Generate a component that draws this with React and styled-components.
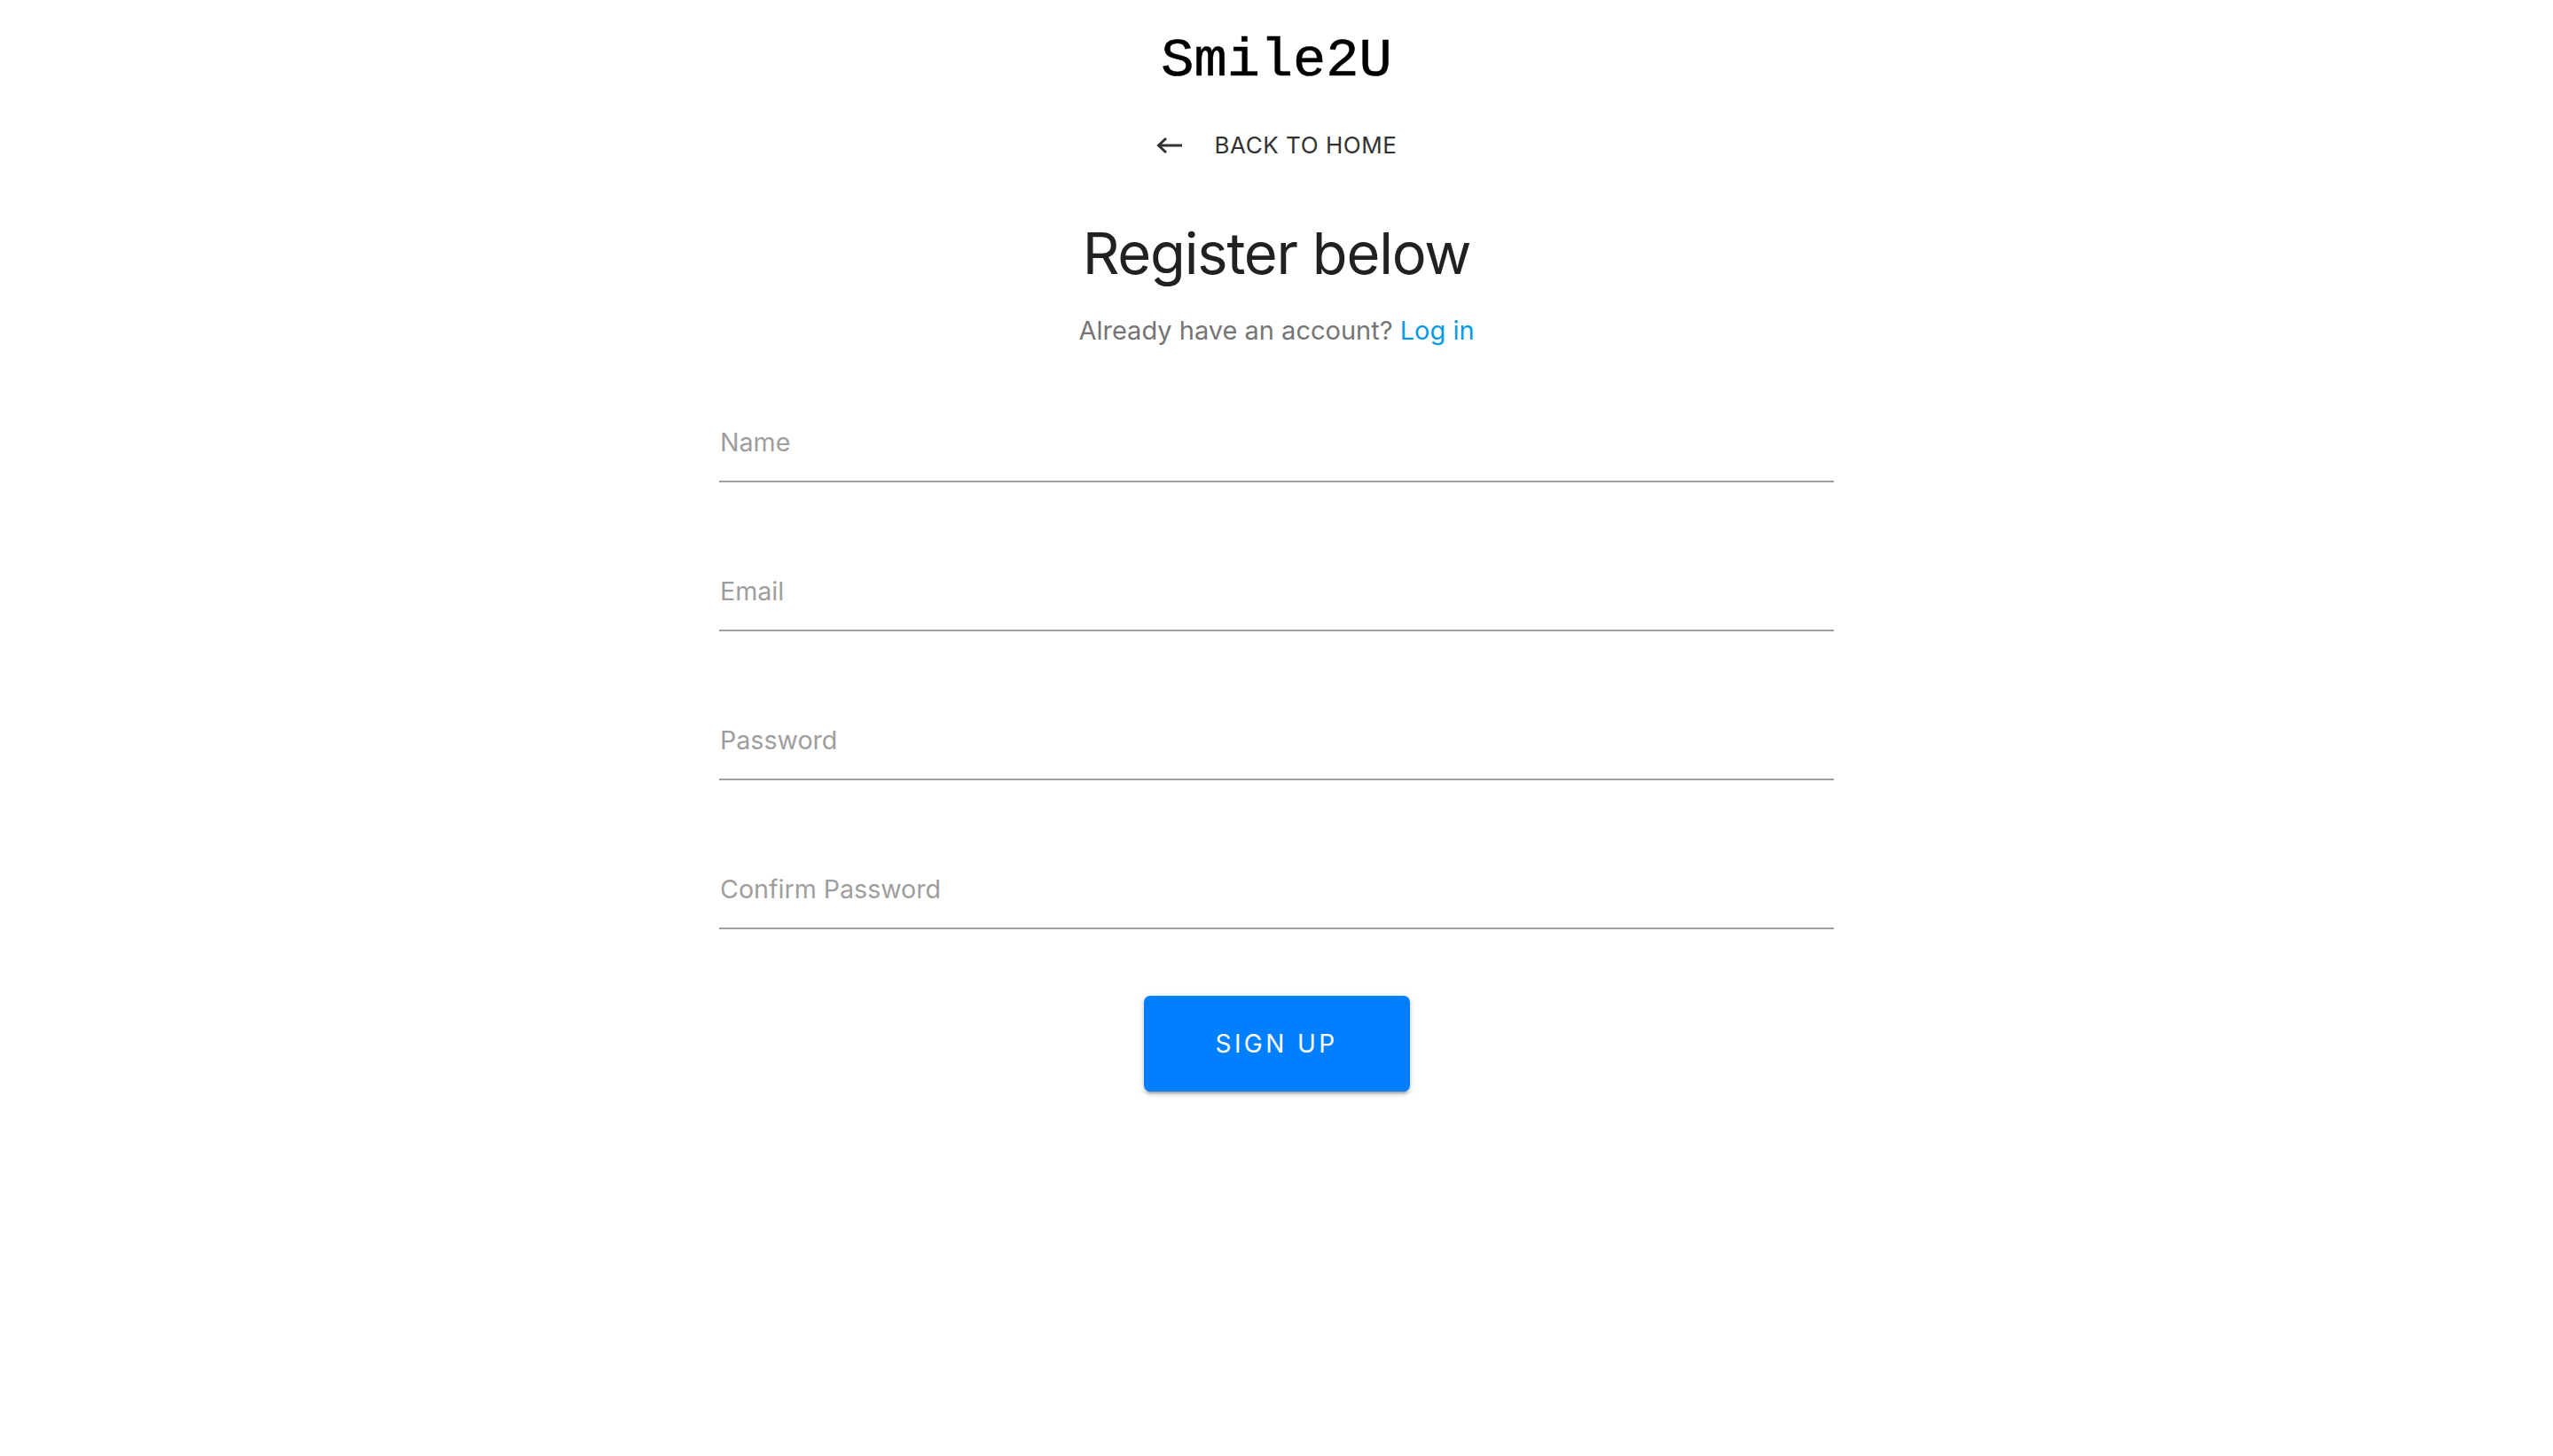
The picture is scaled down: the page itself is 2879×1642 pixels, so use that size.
import React from "react";
import styled, { createGlobalStyle } from "styled-components";

const GlobalStyle = createGlobalStyle`
  html, body { margin: 0; padding: 0; background: #ffffff; }
  body { font-family: Inter, "Noto Sans", sans-serif; }
  * { box-sizing: border-box; }
`;

const Page = styled.main`
  display: flex;
  flex-direction: column;
  align-items: center;
  padding-top: 34px;
  min-height: 1642px;
`;

const Logo = styled.div`
  font-family: "Liberation Mono", "Courier New", monospace;
  font-size: 62px;
  line-height: 70px;
  height: 70px;
  color: #000;
  -webkit-text-stroke: 0.6px #000;
`;

const BackLink = styled.a`
  margin-top: 40px;
  display: flex;
  align-items: center;
  gap: 36px;
  height: 40px;
  color: #333;
  text-decoration: none;
  font-family: Inter, sans-serif;
  font-size: 26px;
  line-height: 40px;
  letter-spacing: 0.55px;
  cursor: pointer;
`;

const Title = styled.h1`
  margin: 62px 0 0;
  font-family: Inter, sans-serif;
  font-weight: 400;
  font-size: 65px;
  line-height: 80px;
  height: 80px;
  color: #212121;
  letter-spacing: -1.2px;
`;

const Subtitle = styled.p`
  margin: 27px 0 0;
  font-family: Inter, sans-serif;
  font-size: 29px;
  line-height: 40px;
  height: 40px;
  color: #757575;
`;

const LoginLink = styled.a`
  color: #039be5;
  text-decoration: none;
`;

const Form = styled.form`
  margin-top: 82px;
  width: 1257px;
  display: flex;
  flex-direction: column;
  gap: 99px;
`;

const Field = styled.div`
  padding-bottom: 19px;
  border-bottom: 2px solid #9e9e9e;
`;

const Input = styled.input`
  display: block;
  width: 100%;
  height: 48px;
  padding: 0 0 0 1px;
  border: none;
  outline: none;
  background: transparent;
  font-family: Inter, sans-serif;
  font-size: 28.6px;
  line-height: 48px;
  color: #212121;
  &::placeholder {
    color: #9e9e9e;
    opacity: 1;
  }
`;

const Actions = styled.div`
  display: flex;
  justify-content: center;
  margin-top: -24px;
`;

const Button = styled.button`
  width: 300px;
  height: 108px;
  border: none;
  border-radius: 7px;
  background: #0080ff;
  color: #fff;
  font-family: Inter, sans-serif;
  font-weight: 400;
  font-size: 28px;
  letter-spacing: 3.4px;
  text-transform: uppercase;
  cursor: pointer;
  box-shadow: 0px 5px 2px -3px rgba(0, 0, 0, 0.2),
    0px 3px 4px 0px rgba(0, 0, 0, 0.14), 0px 2px 9px 0px rgba(0, 0, 0, 0.12);
`;

const ArrowIcon = () => (
  <svg width="30" height="20" viewBox="0 0 30 20" fill="none" aria-hidden="true">
    <line x1="3" y1="10" x2="29" y2="10" stroke="#333" strokeWidth="3" />
    <polyline
      points="11,2 2.5,10 11,18"
      stroke="#333"
      strokeWidth="3"
      fill="none"
    />
  </svg>
);

export default function App() {
  return (
    <>
      <GlobalStyle />
      <Page>
        <Logo>Smile2U</Logo>
        <BackLink>
          <ArrowIcon />
          <span>BACK TO HOME</span>
        </BackLink>
        <Title>Register below</Title>
        <Subtitle>
          Already have an account? <LoginLink>Log in</LoginLink>
        </Subtitle>
        <Form onSubmit={(e) => e.preventDefault()}>
          <Field>
            <Input placeholder="Name" />
          </Field>
          <Field>
            <Input placeholder="Email" type="email" />
          </Field>
          <Field>
            <Input placeholder="Password" type="password" />
          </Field>
          <Field>
            <Input placeholder="Confirm Password" type="password" />
          </Field>
          <Actions>
            <Button type="submit">Sign up</Button>
          </Actions>
        </Form>
      </Page>
    </>
  );
}
